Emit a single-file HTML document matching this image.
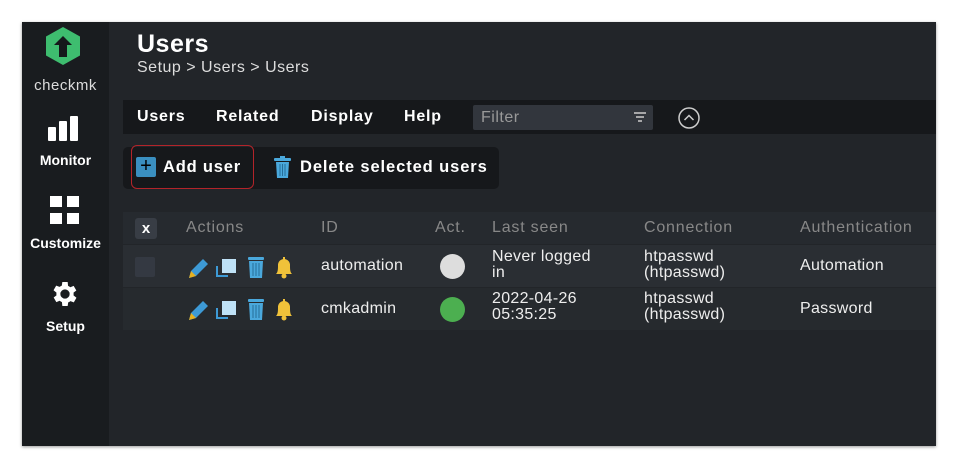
<!DOCTYPE html><html><head><style>
body{margin:0;width:960px;height:470px;background:#fff;position:relative;font-family:"Liberation Sans",sans-serif;overflow:hidden}
.f{position:absolute;left:22px;top:22px;width:914px;height:424px;background:#222529;box-shadow:0 1px 3px rgba(0,0,0,.4)}
.sb{position:absolute;left:22px;top:22px;width:87px;height:424px;background:#191c1f;color:#fff;text-align:center}
.a{position:absolute;color:#fff}
.sb div{position:absolute;width:87px;font-size:14px;font-weight:bold}
.t{font-size:14.5px;color:#fff;font-weight:bold;letter-spacing:.8px}
.h{color:#888;font-size:16px;letter-spacing:.8px}
.c{font-size:16px;color:#eee;line-height:16px;letter-spacing:.3px}
</style></head><body>
<div class="f"></div>
<div class="sb">
<svg style="position:absolute;left:21px;top:4px" width="40" height="40" viewBox="0 0 38 40"><polygon points="19,1 36,10.5 36,29.5 19,39 2,29.5 2,10.5" fill="#3ebd6f"/><path d="M19 10l9 9h-5v12h-8V19h-5z" fill="#15191b"/></svg>
<div style="top:55px;font-weight:normal;font-size:15px;color:#ddd;letter-spacing:.5px">checkmk</div>
<svg style="position:absolute;left:26px;top:94px" width="30" height="26"><rect x="0" y="11" width="8" height="14" rx="1" fill="#fff"/><rect x="11" y="5" width="8" height="20" rx="1" fill="#fff"/><rect x="22" y="0" width="8" height="25" rx="1" fill="#fff"/></svg>
<div style="top:130px">Monitor</div>
<svg style="position:absolute;left:28px;top:174px" width="30" height="30"><rect x="0" y="0" width="12" height="11" fill="#fff"/><rect x="17" y="0" width="12" height="11" fill="#fff"/><rect x="0" y="17" width="12" height="11" fill="#fff"/><rect x="17" y="17" width="12" height="11" fill="#fff"/></svg>
<div style="top:213px">Customize</div>
<svg style="position:absolute;left:27px;top:256px" width="32" height="32" viewBox="0 0 24 24"><path fill="#fff" d="M19.4 13a7.5 7.5 0 000-2l2.1-1.6-2-3.5-2.5 1a7 7 0 00-1.7-1L15 3h-4l-.4 2.7a7 7 0 00-1.7 1l-2.5-1-2 3.5L6.6 11a7.5 7.5 0 000 2l-2.1 1.6 2 3.5 2.5-1a7 7 0 001.7 1L11 21h4l.4-2.7a7 7 0 001.7-1l2.5 1 2-3.5zM13 15.5a3.5 3.5 0 110-7 3.5 3.5 0 010 7z" transform="translate(-1 0)"/></svg>
<div style="top:296px">Setup</div>
</div>
<div class="a" style="left:137px;top:30px;font-size:25px;font-weight:bold;letter-spacing:.5px">Users</div>
<div class="a" style="left:137px;top:59px;font-size:16px;color:#ddd;letter-spacing:.5px">Setup &gt; Users &gt; Users</div>
<div style="position:absolute;left:123px;top:100px;width:813px;height:34px;background:#16181b"></div>
<div class="a t" style="left:137px;top:108px;font-size:16px">Users</div>
<div class="a t" style="left:216px;top:108px;font-size:16px">Related</div>
<div class="a t" style="left:311px;top:108px;font-size:16px">Display</div>
<div class="a t" style="left:404px;top:108px;font-size:16px">Help</div>
<div style="position:absolute;left:473px;top:105px;width:180px;height:25px;background:#32363d;border-radius:2px;color:#999;font-size:16px;line-height:25px;text-indent:8px;letter-spacing:.5px">Filter</div>
<svg style="position:absolute;left:633px;top:110px" width="14" height="14"><path d="M1 3h12M3 7h8M5 11h4" stroke="#ccc" stroke-width="1.6"/></svg>
<svg style="position:absolute;left:677px;top:106px" width="24" height="24"><circle cx="12" cy="12" r="10" fill="none" stroke="#ccc" stroke-width="1.5"/><path d="M7.5 14l4.5-4.5 4.5 4.5" fill="none" stroke="#ccc" stroke-width="1.5"/></svg>
<div style="position:absolute;left:123px;top:147px;width:376px;height:42px;background:#16181b;border-radius:5px"></div>
<div style="position:absolute;left:131px;top:145px;width:123px;height:44px;border:1px solid #b3242a;border-radius:6px;box-sizing:border-box"></div>
<div style="position:absolute;left:136px;top:157px;width:20px;height:20px;background:#3a8fc0;border-radius:2px;color:#000;font-size:20px;line-height:19px;text-align:center">+</div>
<div class="a" style="left:163px;top:158px;font-size:16.5px;font-weight:bold;letter-spacing:.8px">Add user</div>
<svg style="position:absolute;left:274px;top:156px" width="17" height="22"><rect x="0" y="2" width="17" height="3" rx="1" fill="#4aa8dc"/><rect x="6" y="0" width="5" height="3" fill="#4aa8dc"/><path d="M2 6h13l-1 16H3z" fill="#4aa8dc"/><path d="M6 8v12M8.5 8v12M11 8v12" stroke="#256e99" stroke-width="1"/></svg>
<div class="a" style="left:300px;top:158px;font-size:16.5px;font-weight:bold;letter-spacing:.9px">Delete selected users</div>
<div style="position:absolute;left:123px;top:212px;width:813px;height:32px;background:#262a2f"></div>
<div style="position:absolute;left:123px;top:245px;width:813px;height:42px;background:#2a2e33"></div>
<div style="position:absolute;left:123px;top:288px;width:813px;height:42px;background:#262a2e"></div>
<div style="position:absolute;left:135px;top:218px;width:22px;height:21px;background:#383d45;border-radius:3px;color:#fff;font-weight:bold;font-size:15px;text-align:center;line-height:21px">x</div>
<div style="position:absolute;left:135px;top:257px;width:20px;height:20px;background:#343942;border-radius:2px"></div>
<div class="a h" style="left:186px;top:219px">Actions</div>
<div class="a h" style="left:321px;top:219px">ID</div>
<div class="a h" style="left:435px;top:219px">Act.</div>
<div class="a h" style="left:492px;top:219px">Last seen</div>
<div class="a h" style="left:644px;top:219px">Connection</div>
<div class="a h" style="left:800px;top:219px">Authentication</div>
<svg style="position:absolute;left:188px;top:254px" width="110" height="26"><path d="M1 24l2-7L15 5l5 5L8 22z" fill="#3d9ad6"/><path d="M1 24l2-7 5 5z" fill="#e6b020"/><rect x="34" y="5" width="14" height="14" fill="#bfe2f7"/><path d="M28 12v11h12v-2h-10v-9z" fill="#3d9ad6"/><rect x="60" y="3" width="16" height="3" rx="1" fill="#4aa8dc"/><path d="M61 7h14l-1 17H62z" fill="#4aa8dc"/><path d="M65 9v13M68 9v13M71 9v13" stroke="#256e99"/><path d="M88 20c2-2 2-5 2-9a6 6 0 0112 0c0 4 0 7 2 9z" fill="#f0c23a"/><circle cx="96" cy="22" r="2.5" fill="#f0c23a"/><rect x="95" y="3" width="2" height="3" fill="#f0c23a"/></svg>
<svg style="position:absolute;left:188px;top:296px" width="110" height="26"><path d="M1 24l2-7L15 5l5 5L8 22z" fill="#3d9ad6"/><path d="M1 24l2-7 5 5z" fill="#e6b020"/><rect x="34" y="5" width="14" height="14" fill="#bfe2f7"/><path d="M28 12v11h12v-2h-10v-9z" fill="#3d9ad6"/><rect x="60" y="3" width="16" height="3" rx="1" fill="#4aa8dc"/><path d="M61 7h14l-1 17H62z" fill="#4aa8dc"/><path d="M65 9v13M68 9v13M71 9v13" stroke="#256e99"/><path d="M88 20c2-2 2-5 2-9a6 6 0 0112 0c0 4 0 7 2 9z" fill="#f0c23a"/><circle cx="96" cy="22" r="2.5" fill="#f0c23a"/><rect x="95" y="3" width="2" height="3" fill="#f0c23a"/></svg>
<div class="a c" style="left:321px;top:258px">automation</div>
<div class="a c" style="left:321px;top:301px">cmkadmin</div>
<div style="position:absolute;left:440px;top:254px;width:25px;height:25px;border-radius:50%;background:#ddd"></div>
<div style="position:absolute;left:440px;top:297px;width:25px;height:25px;border-radius:50%;background:#4caf50"></div>
<div class="a c" style="left:492px;top:249px">Never logged<br>in</div>
<div class="a c" style="left:492px;top:291px">2022-04-26<br>05:35:25</div>
<div class="a c" style="left:644px;top:249px">htpasswd<br>(htpasswd)</div>
<div class="a c" style="left:644px;top:291px">htpasswd<br>(htpasswd)</div>
<div class="a c" style="left:800px;top:258px">Automation</div>
<div class="a c" style="left:800px;top:301px">Password</div>
</body></html>
